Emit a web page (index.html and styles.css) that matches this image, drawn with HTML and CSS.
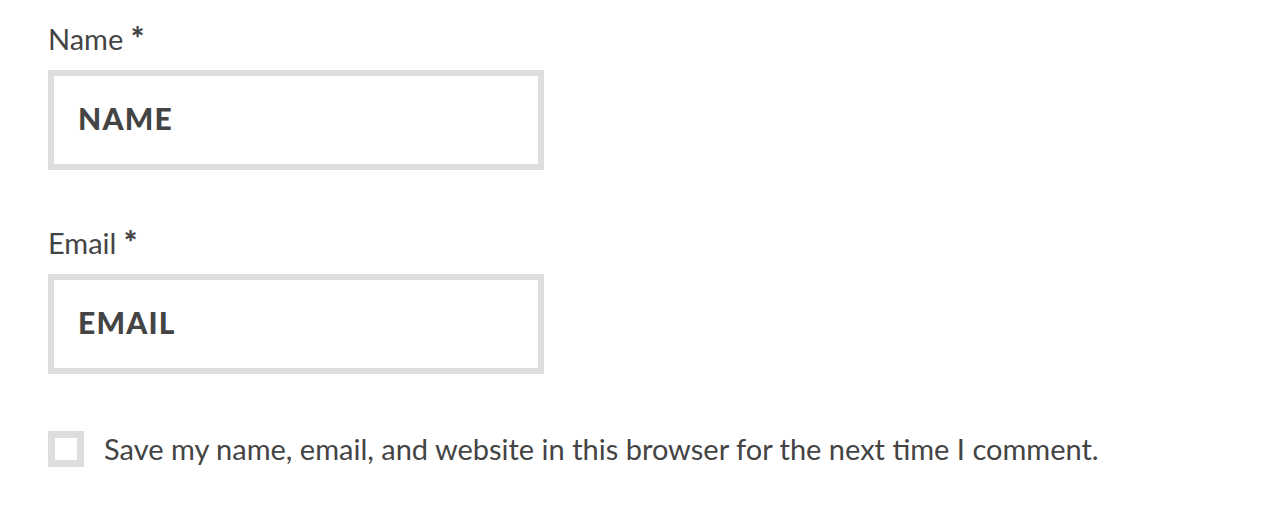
FILE: index.html
```html
<!DOCTYPE html>
<html>
<head>
<meta charset="utf-8">
<link rel="stylesheet" href="styles.css">
</head>
<body>
<form class="comment-form">
  <p class="field">
    <label class="field-label" for="author">Name <span class="req">*</span></label>
    <input class="field-input" id="author" type="text" placeholder="NAME">
  </p>
  <p class="field">
    <label class="field-label" for="email">Email <span class="req">*</span></label>
    <input class="field-input" id="email" type="email" placeholder="EMAIL">
  </p>
  <p class="consent">
    <input class="consent-box" id="consent" type="checkbox">
    <label class="consent-label" for="consent">Save my name, email, and website in this browser for the next time I comment.</label>
  </p>
</form>
</body>
</html>
```
FILE: styles.css
```css
html, body {
  margin: 0;
  padding: 0;
  background: #fff;
}
body {
  font-family: Lato, "Open Sans", sans-serif;
  color: #444;
}
.comment-form {
  padding: 19px 0 0 48px;
}
.field {
  margin: 0 0 53px 0;
  display: flex;
  flex-direction: column;
  align-items: flex-start;
}
.field-label {
  font-size: 29px;
  line-height: 40px;
  margin-bottom: 11px;
}
.req {
  font-weight: 900;
  font-size: 32px;
  line-height: 0;
}
.field-input {
  box-sizing: border-box;
  width: 496px;
  height: 100px;
  border: 6px solid #dddddd;
  padding: 0 24px 4px;
  margin: 0;
  outline: none;
  background: #fff;
  font-family: Lato, sans-serif;
  font-weight: 900;
  font-size: 30px;
  letter-spacing: 1.2px;
  color: #444;
}
.field-input::placeholder {
  color: #444;
  opacity: 1;
}
.consent {
  margin: 55px 0 0 0;
  display: flex;
  align-items: center;
  gap: 20px;
}
.consent-box {
  appearance: none;
  -webkit-appearance: none;
  box-sizing: border-box;
  width: 36px;
  height: 36px;
  border: 7px solid #dddddd;
  margin: 0;
  background: #fff;
}
.consent-label {
  font-size: 29px;
  line-height: 40px;
}
```
